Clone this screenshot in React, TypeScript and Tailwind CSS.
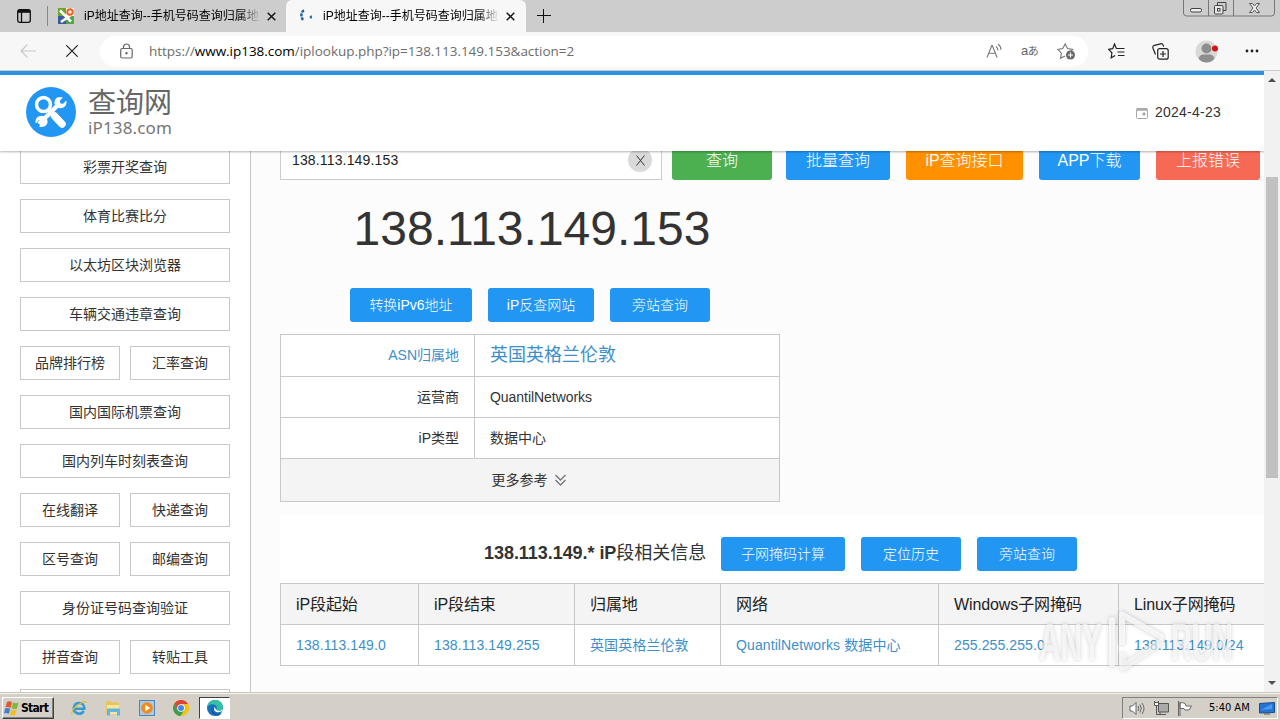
import type { ReactNode } from 'react';
import clsx from 'clsx';

const sideRows = [
  ['彩票开奖查询'],
  ['体育比赛比分'],
  ['以太坊区块浏览器'],
  ['车辆交通违章查询'],
  ['品牌排行榜', '汇率查询'],
  ['国内国际机票查询'],
  ['国内列车时刻表查询'],
  ['在线翻译', '快递查询'],
  ['区号查询', '邮编查询'],
  ['身份证号码查询验证'],
  ['拼音查询', '转贴工具'],
  [''],
];

const columns = [
  { title: 'iP段起始', value: '138.113.149.0', width: 'w-[138px]' },
  { title: 'iP段结束', value: '138.113.149.255', width: 'w-[156px]' },
  { title: '归属地', value: '英国英格兰伦敦', width: 'w-[146px]' },
  { title: '网络', value: 'QuantilNetworks 数据中心', width: 'w-[218px]' },
  { title: 'Windows子网掩码', value: '255.255.255.0', width: 'w-[180px]' },
  { title: 'Linux子网掩码', value: '138.113.149.0/24', width: 'w-[180px]' },
];

const CloseIcon = () => (
  <svg className="h-[9px] w-[9px] shrink-0" viewBox="0 0 9 9" fill="none" stroke="#111" strokeWidth="1.4">
    <path d="M.7.7l7.6 7.6M8.3.7L.7 8.3" />
  </svg>
);

const ToolsIcon = ({ className }: { className: string }) => (
  <svg className={className} viewBox="0 0 50 50" fill="none">
    <circle cx="25" cy="25" r="25" fill="#2196f3" />
    <path d="M13 37L33 17" stroke="#fff" strokeWidth="4.5" />
    <path d="M37 10.500l-3.200 3.300.6 2.600 2.800.4 3-3.200c1.200 4.200-1.700 7.900-6 7.700-4.600-.3-7.300-5-4.900-8.900 1.500-2.300 4.600-3 7.700-1.900z" fill="#fff" />
    <path d="M13 39.500l3.200-3.300-.6-2.600-2.800-.4-3 3.200c-1.200-4.200 1.700-7.900 6-7.700 4.600.3 7.300 5 4.900 8.900-1.500 2.300-4.600 3-7.700 1.900z" fill="#fff" />
    <circle cx="17.500" cy="17.500" r="7" fill="#2196f3" stroke="#fff" strokeWidth="3.500" />
    <path d="M22 22.500l5 5" stroke="#fff" strokeWidth="3.500" />
    <path d="M28.500 29l7.500 8" stroke="#fff" strokeWidth="7.500" strokeLinecap="round" />
  </svg>
);

const Favicon = () => (
  <svg className="h-4 w-4 shrink-0" viewBox="0 0 16 16" fill="none">
    <path fill="#6aa52f" d="M0 0h8v8H0z" />
    <path fill="#fdf3e7" d="M8 0h8v8H8z" />
    <path fill="#3d5a9e" d="M0 8h8v8H0z" />
    <path fill="#52a447" d="M8 8h8v8H8z" />
    <path d="M2 2.500l11 11M13 7L3 14" stroke="#fff" strokeWidth="2.500" />
    <circle cx="12" cy="4" r="2.700" stroke="#e8632a" strokeWidth="2" />
  </svg>
);

const TabStrip = () => (
  <div className="flex h-8 shrink-0 bg-[#cdcdcd]">
    <div className="flex h-8 w-[286px] items-center rounded-br-md pl-[17px]">
      <svg className="h-[14px] w-[14px]" viewBox="0 0 14 14" fill="none" stroke="#111" strokeWidth="1.300">
        <rect x=".7" y=".7" width="12.600" height="12.600" rx="2" />
        <path d="M1 2.300h12" strokeWidth="3" />
        <path d="M4.500 3v10" />
      </svg>
      <div className="ml-4 h-5 w-px bg-[#888]" />
      <div className="ml-[10px]">
        <Favicon />
      </div>
      <div className="ml-[10px] w-[174px] overflow-hidden whitespace-nowrap text-[12px] leading-8 text-black [mask-image:linear-gradient(to_right,black_155px,transparent_177px)]">
        iP地址查询--手机号码查询归属地
      </div>
      <div className="ml-[9px]">
        <CloseIcon />
      </div>
    </div>
    <div className="flex h-8 w-[240px] items-center rounded-t-md bg-[#f7f7f7] pl-[10px]">
      <svg className="h-4 w-4" viewBox="0 0 16 16" fill="none">
        <path d="M10.500 2.300C7.500 4 7 8 9.500 12" stroke="#1f6097" strokeWidth="2.400" strokeDasharray="3 1" transform="translate(-2.500)" />
        <circle cx="15" cy="9" r="1.500" fill="#2374b8" />
      </svg>
      <div className="ml-[11px] w-[174px] overflow-hidden whitespace-nowrap text-[12px] leading-8 text-black [mask-image:linear-gradient(to_right,black_155px,transparent_177px)]">
        iP地址查询--手机号码查询归属地
      </div>
      <div className="ml-[9px]">
        <CloseIcon />
      </div>
    </div>
    <svg className="mt-[9px] ml-[11px] h-[14px] w-[14px]" viewBox="0 0 14 14" stroke="#111" strokeWidth="1">
      <path d="M6.500 0v14M0 6.500h14" />
    </svg>
    <svg className="mr-1 ml-auto h-[18px] w-[94px]" viewBox="0 0 94 18" fill="none" stroke="#666">
      <path d="M1.500 0v13q0 3 3 3h85q3 0 3-3V0M26.500 0v16M51.500 0v16" stroke="#777" />
      <rect x="8.500" y="8.500" width="11" height="3.500" rx="1.500" stroke="#444" fill="#eee" />
      <path d="M35.500 5.500V2.500h8.500v8h-3" stroke="#444" />
      <rect x="32.500" y="5.500" width="8.500" height="8.500" rx="1" stroke="#444" fill="#e6e6e6" />
      <rect x="35.500" y="8.500" width="2.500" height="2.500" stroke="#444" />
      <path d="M67.500 3.500h3l2 2.500 2-2.500h3l-3.500 4.500 3.500 4.500h-3l-2-2.500-2 2.500h-3L71 8z" stroke="#555" fill="#eee" />
    </svg>
  </div>
);

const Toolbar = () => (
  <div className="flex h-[39px] shrink-0 items-center border-b border-[#c9c9c9] bg-[#f7f7f7]">
    <svg className="ml-5 h-4 w-4" viewBox="0 0 16 16" fill="none" stroke="#c9c9c9" strokeWidth="1.200">
      <path d="M16 8H1M7.500 1.500L1 8l6.500 6.500" />
    </svg>
    <svg className="ml-[30px] h-3 w-3" viewBox="0 0 12 12" stroke="#222" strokeWidth="1.200">
      <path d="M.3.300l11.400 11.400M11.700.300L.3 11.700" />
    </svg>
    <div className="ml-[22px] flex h-[31px] w-[988px] items-center rounded-full bg-white pl-5">
      <svg className="-mt-px h-4 w-[13px]" viewBox="0 0 13 16" fill="none" stroke="#666" strokeWidth="1.200">
        <rect x=".7" y="5.500" width="11.500" height="9.500" rx="1.500" />
        <path d="M3.500 5.500V4a3 3 0 016 0v1.500" />
        <circle cx="6.500" cy="10.200" r=".6" fill="#666" />
      </svg>
      <div className="ml-4 w-[430px] whitespace-nowrap font-['Open_Sans','Noto_Sans',sans-serif] text-[13.500px] tracking-[-0.030px] text-[#6d6d6d]">
        https://<span className="text-black">www.ip138.com</span>/iplookup.php?ip=138.113.149.153&amp;action=2
      </div>
      <svg className="ml-auto h-4 w-[17px]" viewBox="0 0 17 16" fill="none" stroke="#777" strokeWidth="1.100">
        <path d="M1 14.500L5.800 2.500h.5l4.800 12M2.700 10.300h6.700M10 3.500q2 1.500 2 4M12 1.200q3 2 3 5.500" />
      </svg>
      <div className="ml-[18px] w-[18px] whitespace-nowrap text-[11px] tracking-[-0.500px] text-[#666]">
        <span className="text-[13px]">a</span>あ
      </div>
      <svg className="mr-3 ml-[18px] h-[18px] w-[19px]" viewBox="0 0 19 18" fill="none" stroke="#777" strokeWidth="1.100">
        <path d="M8 14l-4.500 2.300.9-5.200L.8 7.400l5-.8L8.200 2l2.300 4.600 5.200.800-2 2" />
        <circle cx="13.500" cy="13" r="4.500" fill="#666" stroke="none" />
        <path d="M11 13h5M13.500 10.500v5" stroke="#fff" strokeWidth="1.200" />
      </svg>
    </div>
    <svg className="ml-5 h-4 w-[17px]" viewBox="0 0 17 16" fill="none" stroke="#222" strokeWidth="1.200">
      <path d="M8.500 5.800L6.500 1 4.700 5.700.6 6.300l3.300 3.500-.7 5 4-2.300M8.500 5.500h8M9.500 9h7M10 12.500h6.500" />
    </svg>
    <svg className="ml-[27px] h-[17px] w-[17px]" viewBox="0 0 17 17" fill="none" stroke="#222" strokeWidth="1.200">
      <rect x="5.700" y="5.700" width="10.500" height="10.500" rx="2" />
      <path d="M3.500 11.500L1 5.200Q.3 3 2.300 2.300L8.600.8q2-.4 2.600 1.300l.4 1.600M11 8v6M8 11h6" />
    </svg>
    <svg className="ml-[26px] h-[23px] w-[24px]" viewBox="0 0 24 23">
      <circle cx="11.500" cy="11.500" r="11" fill="#d9d9d7" />
      <circle cx="11.500" cy="8.500" r="5" fill="#8e8e8e" />
      <path d="M3.500 18.500q1.500-4 4.500-4h7q3 0 4.500 4-3 4-8 4t-8-4z" fill="#8e8e8e" />
      <circle cx="20" cy="8.500" r="3" fill="#d8101c" />
    </svg>
    <svg className="ml-[26px] h-1 w-[14px]" viewBox="0 0 14 4" fill="#222">
      <circle cx="2" cy="2" r="1.400" />
      <circle cx="7" cy="2" r="1.400" />
      <circle cx="12" cy="2" r="1.400" />
    </svg>
  </div>
);

const Header = () => (
  <header className="z-10 flex h-20 shrink-0 items-center border-t-4 border-[#2b91e3] bg-white pr-[43px] pl-[26px] shadow-[0_1px_2px_rgba(0,0,0,0.300)]">
    <ToolsIcon className="-mt-[2px] h-[50px] w-[50px]" />
    <div className="ml-3 whitespace-nowrap text-[#555]">
      <div className="pt-[2px] text-[28px] leading-[29px] font-normal text-[#666]">查询网</div>
      <div className="pb-[2px] font-['Noto_Sans',sans-serif] text-[17px] leading-[19px] tracking-[0.150px] text-[#777]">iP138.com</div>
    </div>
    <svg className="ml-auto h-3 w-3" viewBox="0 0 12 12" fill="none" stroke="#aaa">
      <rect x=".5" y="1.500" width="11" height="10" rx="1" />
      <path d="M1 2.500h10" strokeWidth="2.500" />
      <path d="M7 6h2v2H7z" fill="#999" />
    </svg>
    <span className="-mt-[2px] ml-[7px] text-[14px] tracking-[0.250px] text-[#333]">2024-4-23</span>
  </header>
);

const Button = ({ children, className }: { children: ReactNode; className: string }) => (
  <button className={clsx('flex h-[34px] shrink-0 items-center justify-center whitespace-nowrap rounded-[3px] bg-[#2196f3] text-[14px] font-light text-white', className)}>
    {children}
  </button>
);

const Sidebar = () => (
  <aside className="w-[251px] shrink-0 border-r border-[#c8c8c8] bg-white px-5">
    <div className="-mt-px flex flex-col gap-[15px]">
      {sideRows.map((row, i) => (
        <div key={i} className="flex gap-[10px]">
          {row.map((label) => (
            <a key={label} className="flex h-[34px] flex-1 items-center justify-center border border-[#c8c8c8] text-[14px] text-[#333]">
              {label}
            </a>
          ))}
        </div>
      ))}
    </div>
  </aside>
);

const SearchRow = () => (
  <div className="-mt-[11px] flex h-10">
    <div className="flex w-[382px] shrink-0 items-center justify-between border border-[#ccc] bg-white pr-[9px] pl-[11px] text-[14px] tracking-[0.150px] text-[#222]">
      138.113.149.153
      <span className="flex h-6 w-6 items-center justify-center rounded-full bg-[#d9d9d9]">
        <svg className="h-[11px] w-[9px]" viewBox="0 0 9 11" stroke="#333">
          <path d="M.5.500l8 10M8.500.500l-8 10" />
        </svg>
      </span>
    </div>
    <Button className="ml-[10px] h-10! w-[100px] bg-[#4caf50]! pt-px text-[16px]!">查询</Button>
    <Button className="ml-[14px] h-10! w-[104px] pt-px text-[16px]!">批量查询</Button>
    <Button className="ml-4 h-10! w-[117px] bg-[#ff9100]! pt-px text-[16px]!">iP查询接口</Button>
    <Button className="ml-4 h-10! w-[101px] pt-px text-[16px]!">APP下载</Button>
    <Button className="ml-4 h-10! w-[104px] bg-[#f66a55]! pt-px text-[16px]!">上报错误</Button>
  </div>
);

const InfoRow = ({ label, children, className }: { label: string; children: ReactNode; className?: string }) => (
  <div className={clsx('flex h-[41px] border-b border-[#c8c8c8] text-[14px] text-[#333]', className)}>
    <div className="flex w-[194px] items-center justify-end border-r border-[#c8c8c8] pr-[15px]">{label}</div>
    <div className="flex items-center pl-[15px]">{children}</div>
  </div>
);

const IpInfo = () => (
  <section className="w-[500px]">
    <h1 className="mt-[21px] pl-1 text-center text-[48px] leading-[56px] text-[#333]">138.113.149.153</h1>
    <div className="mt-[31px] flex justify-center gap-4">
      <Button className="w-[122px]">转换iPv6地址</Button>
      <Button className="w-[106px]">iP反查网站</Button>
      <Button className="w-[100px]">旁站查询</Button>
    </div>
    <div className="mt-3 border border-[#c8c8c8] bg-white">
      <InfoRow label="ASN归属地" className="h-[42px]! text-[#3d8fcb]!">
        <span className="text-[18px]">英国英格兰伦敦</span>
      </InfoRow>
      <InfoRow label="运营商">
        <span className="tracking-[-0.050px]">QuantilNetworks</span>
      </InfoRow>
      <InfoRow label="iP类型">数据中心</InfoRow>
      <div className="flex h-[42px] items-center justify-center bg-[#f4f4f4] pr-[3px] text-[14px] text-[#333]">
        更多参考
        <svg className="ml-[7px] h-3 w-[11px]" viewBox="0 0 11 12" fill="none" stroke="#777" strokeWidth="1.400">
          <path d="M.5 1l5 5 5-5M.5 6l5 5 5-5" />
        </svg>
      </div>
    </div>
  </section>
);

const RangeTable = () => (
  <section className="mt-[13px] -mr-10 bg-white pt-[22px]">
    <div className="flex items-center pl-[204px]">
      <h2 className="-mt-[2px] w-[237px] whitespace-nowrap text-[18px] tracking-[-0.050px] text-[#333]">
        <b>138.113.149.* iP</b>段相关信息
      </h2>
      <Button className="w-[124px]">子网掩码计算</Button>
      <Button className="ml-4 w-[100px]">定位历史</Button>
      <Button className="ml-4 w-[100px]">旁站查询</Button>
    </div>
    <div className="mt-3 flex border-t border-[#c8c8c8]">
      {columns.map((col) => (
        <div key={col.title} className={clsx('shrink-0 border-l border-[#c8c8c8] whitespace-nowrap', col.width)}>
          <div className="flex h-[41px] items-center border-b border-[#c8c8c8] bg-[#f4f4f4] pt-px pl-[15px] text-[16px] tracking-[-0.100px] text-[#222]">{col.title}</div>
          <div className="flex h-[41px] items-center border-b border-[#c8c8c8] pl-[15px] text-[14px] tracking-[0.100px] text-[#3d8fcb]">{col.value}</div>
        </div>
      ))}
    </div>
  </section>
);

const Scrollbar = () => (
  <div className="flex w-4 shrink-0 flex-col items-center bg-[#f1f1f1] py-[6px]">
    <svg className="h-[5px] w-2" viewBox="0 0 8 5" fill="#505050">
      <path d="M0 5l4-4 4 4z" />
    </svg>
    <div className="mt-[95px] h-[301px] w-3 bg-[#c1c1c1]" />
    <svg className="mt-auto h-[5px] w-2" viewBox="0 0 8 5" fill="#505050">
      <path d="M0 0l4 4 4-4z" />
    </svg>
  </div>
);

const Watermark = () => (
  <svg className="absolute top-[606px] left-[1034px] z-20 h-[68px] w-[204px] drop-shadow-[0_0_2px_rgba(0,0,0,0.280)]" viewBox="0 0 204 68" fill="none">
    <g fill="#fff" fillOpacity=".65" fontFamily="Liberation Sans Narrow, Liberation Sans, sans-serif" fontSize="52" fontWeight="700">
      <text x="5" y="54" textLength="63" lengthAdjust="spacingAndGlyphs">ANY</text>
      <text x="137" y="54" textLength="62" lengthAdjust="spacingAndGlyphs">RUN</text>
    </g>
    <path d="M78 14v44M88 36V8.500L127 30.500" stroke="#fff" strokeOpacity=".75" strokeWidth="6" strokeLinejoin="round" strokeLinecap="round" />
    <path d="M127 36L89 61V50" stroke="#fff" strokeOpacity=".6" strokeWidth="7" strokeLinejoin="round" strokeLinecap="round" />
  </svg>
);

const Taskbar = () => (
  <footer className="z-10 flex h-[29px] shrink-0 items-center border-t border-[#c8c5be] bg-[#d4d0c8] pr-[2px] pl-[2px] shadow-[inset_0_1px_0_#f5f4f0]">
    <button className="mt-[2px] flex h-[22px] w-[52px] items-center border border-t-white border-r-[#404040] border-b-[#404040] border-l-white pl-px font-['DejaVu_Sans_Condensed','DejaVu_Sans',sans-serif] text-[12px] font-bold tracking-[-0.700px] text-black shadow-[inset_-1px_-1px_#808080]">
      <svg className="mr-px h-4 w-4 shrink-0" viewBox="0 0 16 16">
        <path d="M3 2q2.500-1.500 5 0L6.500 8Q4 6.500 1.500 7.500z" fill="#e2572b" />
        <path d="M9 2.500q2.500 1.500 5.500 0L13 8.500q-3 1.300-5.500-.2z" fill="#7db83a" />
        <path d="M1.200 8.500q2.500-1.200 5 .4L4.700 14Q2 12.500 0 13.500z" fill="#3b82d0" />
        <path d="M7.200 9.400q2.500 1.400 5.500.2L11.200 15q-3 1.200-5.500-.4z" fill="#f5bd25" />
      </svg>
      Start
    </button>
    {/* quick launch: IE, Explorer, Media Player, Chrome */}
    <svg className="mt-[2px] ml-[17px] h-4 w-4" viewBox="0 0 16 16" fill="none">
      <path d="M12.700 11A5.300 5.300 0 118.300 3a5 5 0 015 5.800H4" stroke="#359bd5" strokeWidth="2.500" />
      <path d="M1 14.500Q0 10 7 5t8.500-2.500" stroke="#e9b934" strokeWidth="1.200" />
    </svg>
    <svg className="mt-[2px] ml-[18px] h-4 w-4" viewBox="0 0 16 16">
      <path d="M1 2.500L2 1h4l1 1.500h7V14H1z" fill="#e6c55b" />
      <path d="M2 5h12v9H2z" fill="#f6e6a0" />
      <path d="M2 15.500v-6q0-1 1-1h11q1 0 1 1v6h-3V12H5v3.500z" fill="#62b5dc" />
    </svg>
    <svg className="mt-[2px] ml-[18px] h-4 w-4" viewBox="0 0 16 16">
      <rect x=".5" y=".5" width="15" height="15" fill="#a9cbe8" stroke="#4d86bd" />
      <circle cx="8" cy="8" r="5.800" fill="#f28a18" />
      <path d="M6.300 4.800L11.300 8l-5 3.200z" fill="#fff" />
    </svg>
    <svg className="mt-[2px] ml-[18px] h-4 w-4" viewBox="0 0 16 16">
      <circle cx="8" cy="8" r="8" fill="#f4c20d" />
      <path d="M1.100 4A8 8 0 0115 4H8L4.500 10z" fill="#db4437" />
      <path d="M1.100 4A8 8 0 007.500 16l3.400-5.500-6.400-.5z" fill="#3c9d4f" />
      <circle cx="8" cy="8" r="3.800" fill="#fff" />
      <circle cx="8" cy="8" r="3" fill="#4285f4" />
    </svg>
    <div className="mt-[2px] ml-[10px] flex h-[22px] w-[31px] items-center justify-center border border-t-[#404040] border-r-white border-b-white border-l-[#404040] bg-white">
      <svg className="h-4 w-4" viewBox="0 0 16 16">
        <circle cx="8" cy="8" r="8" fill="#1473bf" />
        <path d="M.3 7Q1.500 0 8 0q7 0 8 7-.3 4-4.500 4-2.500 0-2.500-1.500 1.300-1 .7-3Q8 4 5 4.200 2 4.500.3 7z" fill="#35bfa5" />
        <path d="M6 7Q4 12 9 14q3 .7 5.500-1-1 2-3.500 2.700Q5 15 4.500 10.500 4.500 8 6 7z" fill="#124f98" />
        <path d="M7.500 7Q6 10.500 9.500 12q3 .7 5.500-1l1-2-3 2q-4-.2-4-1.500z" fill="#fff" />
      </svg>
    </div>
    <div className="mt-[2px] ml-auto flex h-[22px] w-[156px] items-center border border-t-[#808080] border-r-white border-b-white border-l-[#808080] pl-[6px]">
      <svg className="h-[15px] w-4" viewBox="0 0 16 15" fill="none" stroke="#666">
        <path d="M1 5h2.500L7 1.500v12L3.500 10H1z" fill="#fff" />
        <path d="M9 5q1.500 2.500 0 5M11 3.500q2.500 4 0 8M13 2q4 5.500 0 11" />
      </svg>
      <svg className="ml-2 h-4 w-4" viewBox="0 0 16 16" fill="none" stroke="#555">
        <path d="M5.500 3.500h10v8.500h-10z" fill="#aaa" />
        <path d="M1.500 1v3.500h4V1M3.500 5v9.500H13M7 14.500v-2.500" />
        <path d="M1.500 2.500h4v3h-4z" fill="#fff" />
      </svg>
      <svg className="ml-[8px] h-[15px] w-4" viewBox="0 0 16 15" fill="none" stroke="#666">
        <path d="M3 2q3-1 5 .5L9 5h5.500L12 9H8L7 7.500H3z" fill="#fff" />
        <path d="M1.500 0v15M3 1v14" />
      </svg>
      <span className="ml-4 w-[50px] whitespace-nowrap font-['DejaVu_Sans_Condensed','DejaVu_Sans',sans-serif] text-[11px] text-black">5:40 AM</span>
      <svg className="h-[13px] w-4" viewBox="0 0 16 13">
        <path d="M.5 1.500L15.500.5v10l-15 .5z" fill="#2674d4" stroke="#174b8c" />
        <path d="M2 8L13 2v5z" fill="#4a9bef" />
        <path d="M5 12h6" stroke="#555" />
      </svg>
    </div>
  </footer>
);

const App = () => (
  <div className="relative flex h-[720px] w-[1280px] flex-col overflow-hidden bg-[#fcfcfc] font-['Liberation_Sans','Noto_Sans_CJK_SC',sans-serif]">
    <TabStrip />
    <Toolbar />
    <div className="flex h-[621px] shrink-0">
      <div className="flex w-[1264px] shrink-0 flex-col overflow-hidden">
        <Header />
        <div className="flex h-[541px] overflow-hidden">
          <Sidebar />
          <main className="min-w-0 flex-1 overflow-hidden pl-[29px]">
            <SearchRow />
            <IpInfo />
            <RangeTable />
          </main>
        </div>
      </div>
      <Scrollbar />
    </div>
    <Taskbar />
    <Watermark />
  </div>
);

export default App;
